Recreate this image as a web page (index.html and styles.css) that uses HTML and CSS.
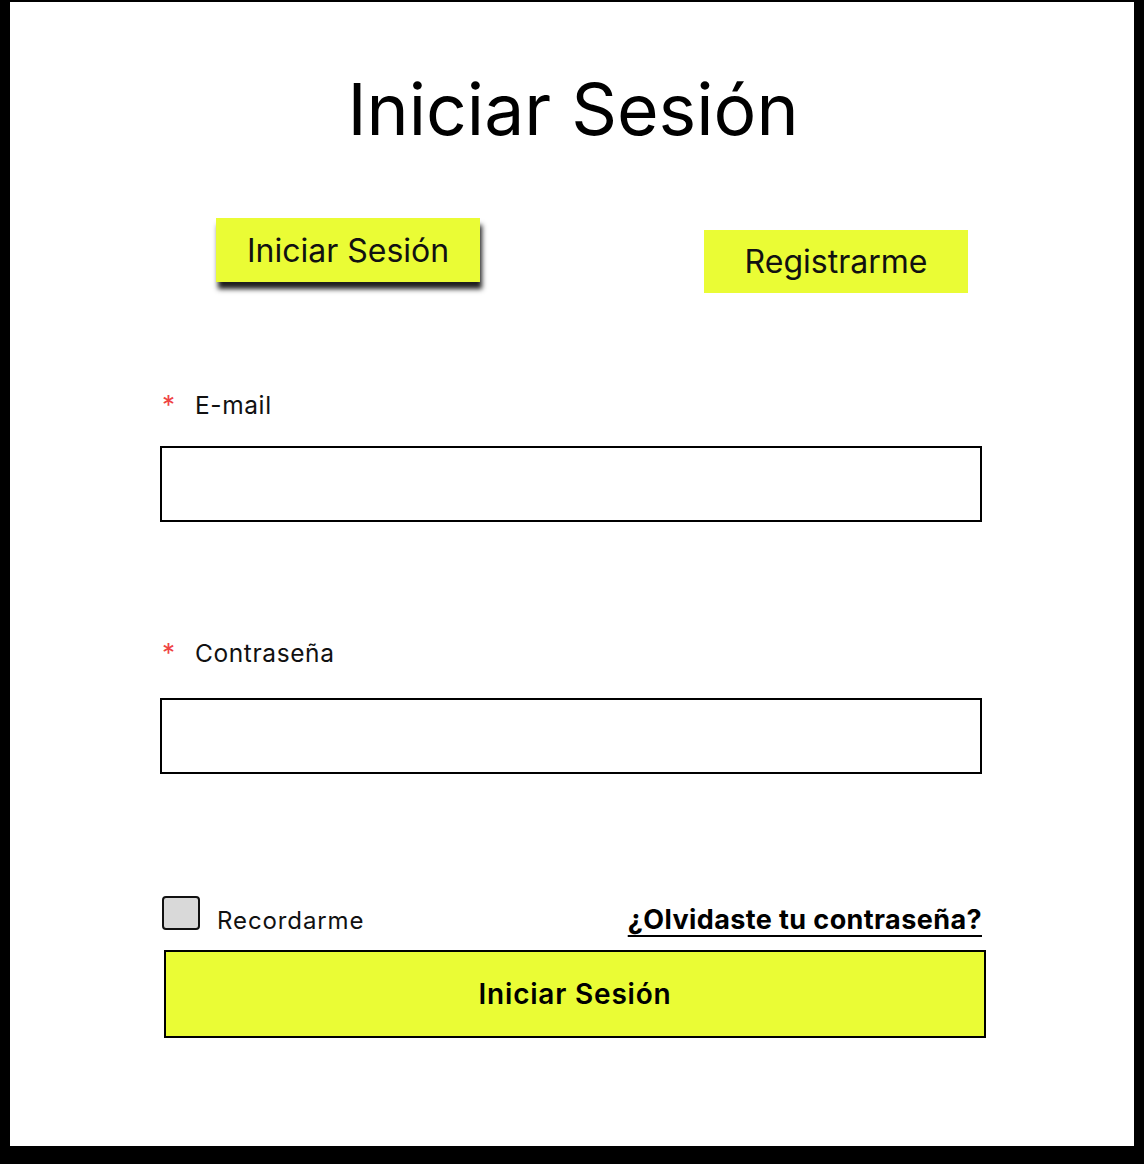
FILE: index.html
```html
<!DOCTYPE html>
<html lang="es">
<head>
<meta charset="utf-8">
<title>Iniciar Sesión</title>
<link rel="stylesheet" href="styles.css">
</head>
<body>
<main class="card">
  <h1 class="title">Iniciar Sesión</h1>
  <div class="tabs">
    <button class="tab tab-active">Iniciar Sesión</button>
    <button class="tab tab-other">Registrarme</button>
  </div>
  <form class="form">
    <label class="label label-email"><span class="req">*</span>E-mail</label>
    <div class="input"></div>
    <label class="label label-pass"><span class="req">*</span>Contraseña</label>
    <div class="input"></div>
    <div class="row">
      <div class="remember"><span class="checkbox"></span><span class="remember-text">Recordarme</span></div>
      <a class="forgot" href="#">¿Olvidaste tu contraseña?</a>
    </div>
    <button class="submit" type="button">Iniciar Sesión</button>
  </form>
</main>
</body>
</html>
```

FILE: styles.css
```css
* { box-sizing: border-box; }
html, body { margin: 0; padding: 0; }
body {
  background: #000;
  font-family: Inter, "Noto Sans", sans-serif;
  color: #000;
  padding: 2px 10px 18px 10px;
}
.card {
  background: #fff;
  height: 1144px;
  display: flex;
  flex-direction: column;
}
.title {
  margin: 71px 0 0 2px;
  font-size: 71.4px;
  line-height: 72px;
  font-weight: 400;
  text-align: center;
}
.tabs {
  display: flex;
  align-items: flex-start;
  margin-top: 73px;
  padding-left: 206px;
}
.tab {
  width: 264px;
  height: 64px;
  background: #eafc35;
  border: none;
  font-family: inherit;
  font-size: 32px;
  color: #111;
  padding: 0;
}
.tab-active {
  box-shadow: 2px 7px 5px rgba(0,0,0,0.88);
}
.tab-other {
  margin-top: 12px;
  margin-left: 224px;
  height: 63px;
}
.form {
  display: flex;
  flex-direction: column;
  padding-left: 150px;
  width: 972px;
  margin-top: 101px;
}
.label {
  font-size: 24.5px;
  line-height: 22px;
  letter-spacing: 0.6px;
  display: flex;
  align-items: center;
  color: #111;
}
.req {
  color: #ef4444;
  width: 35px;
  padding-left: 2px;
  font-size: 26px;
  letter-spacing: 0;
}
.input {
  width: 822px;
  height: 76px;
  border: 2px solid #000;
  margin-top: 30px;
}
.label-pass { margin-top: 120px; }
.label-pass + .input { margin-top: 34px; }
.row {
  margin-top: 122px;
  height: 54px;
  display: flex;
  justify-content: space-between;
  align-items: flex-start;
  width: 822px;
}
.remember { display: flex; align-items: flex-start; padding-left: 2px; }
.checkbox {
  width: 38px;
  height: 34px;
  background: #d9d9d9;
  border: 2px solid #111;
  border-radius: 4px;
}
.remember-text {
  font-size: 24px;
  line-height: 24px;
  letter-spacing: 0.9px;
  margin-left: 17px;
  margin-top: 13px;
  color: #111;
}
.forgot {
  font-size: 27px;
  font-weight: 700;
  letter-spacing: 0.4px;
  color: #000;
  line-height: 24px;
  margin-top: 12px;
  text-decoration: underline;
  text-decoration-thickness: 2px;
  text-underline-offset: 6px;
}
.submit {
  margin-top: 0;
  margin-left: 4px;
  width: 822px;
  height: 88px;
  background: #eafc35;
  border: 2px solid #000;
  font-family: inherit;
  font-size: 28px;
  font-weight: 600;
  letter-spacing: 0.8px;
  color: #000;
  padding: 0;
}
```
